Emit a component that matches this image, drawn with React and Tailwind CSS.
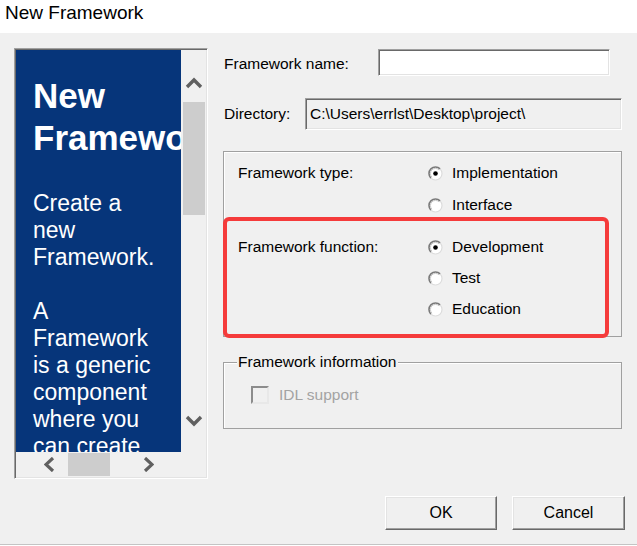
const sunken =
  "border border-t-[#a0a0a0] border-l-[#a0a0a0] border-b-white border-r-white shadow-[inset_1px_1px_0_#696969,inset_-1px_-1px_0_#e3e3e3]";
const raised =
  "border border-t-white border-l-white border-b-[#696969] border-r-[#696969] shadow-[inset_-1px_-1px_0_#a0a0a0,inset_1px_1px_0_#e3e3e3]";

const Chevron = ({ dir }) => {
  if (dir === "up" || dir === "down") {
    const pts = dir === "up" ? "2,10 9,3 16,10" : "2,3 9,10 16,3";
    return (
      <svg width="18" height="13" viewBox="0 0 18 13">
        <polyline points={pts} fill="none" stroke="#606060" strokeWidth="3.4" />
      </svg>
    );
  }
  const pts = dir === "left" ? "9,1 2,7.5 9,14" : "2,1 9,7.5 2,14";
  return (
    <svg width="11" height="15" viewBox="0 0 11 15">
      <polyline points={pts} fill="none" stroke="#606060" strokeWidth="3.2" />
    </svg>
  );
};

const Radio = ({ checked, label }) => (
  <div className="flex h-[20px] items-center">
    <svg width="15" height="15" viewBox="0 0 15 15" className="ml-[-1px]">
      <circle cx="7.5" cy="7.5" r="6.5" fill="#fff" />
      <path d="M2.9 12.1 A6.5 6.5 0 0 1 12.1 2.9" fill="none" stroke="#7a7a7a" strokeWidth="1.6" />
      <path d="M3.9 11.1 A5 5 0 0 1 11.1 3.9" fill="none" stroke="#c8c8c8" strokeWidth="1" />
      <path d="M12.1 2.9 A6.5 6.5 0 0 1 2.9 12.1" fill="none" stroke="#dcdcdc" strokeWidth="1.2" />
      {checked && <circle cx="7.5" cy="7.5" r="2.3" fill="#000" />}
    </svg>
    <span className="ml-[9px]">{label}</span>
  </div>
);

const InfoPanel = () => (
  <div className={`ml-[14px] mt-[15px] h-[431px] w-[194px] p-[1px] ${sunken}`}>
    <div className="grid h-full grid-cols-[165px_25px] grid-rows-[402px_25px]">
      <div className="overflow-hidden bg-[#06357a] pl-[17px] text-white">
        <h2 className="mt-[25px] w-[130px] text-[35px] font-bold leading-[42px]">New Framework</h2>
        <p className="mt-[31px] w-[130px] text-[23px] leading-[27px]">Create a new Framework.</p>
        <p className="mt-[27px] w-[130px] text-[23px] leading-[27px]">
          A Framework is a generic component where you can create ...
        </p>
      </div>
      <div className="flex flex-col items-center">
        <div className="flex h-[52px] items-center justify-center pt-[14px]">
          <Chevron dir="up" />
        </div>
        <div className="h-[113px] w-[22px] bg-[#cdcdcd]" />
        <div className="flex-1" />
        <div className="flex h-[52px] items-center justify-center pb-[12px]">
          <Chevron dir="down" />
        </div>
      </div>
      <div className="flex items-center">
        <div className="flex w-[52px] items-center justify-center pl-[14px]">
          <Chevron dir="left" />
        </div>
        <div className="h-[23px] w-[42px] bg-[#cdcdcd]" />
        <div className="flex-1" />
        <div className="flex w-[52px] items-center justify-center pr-[14px]">
          <Chevron dir="right" />
        </div>
      </div>
      <div />
    </div>
  </div>
);

export default function App() {
  return (
    <div
      className="h-[546px] w-[637px] overflow-hidden bg-white text-black"
      style={{ fontFamily: '"Liberation Sans", Arial, sans-serif' }}
    >
      <div className="h-[33px] pl-[5px] pt-[2px] text-[19px] leading-[22px]">New Framework</div>

      <div className="flex h-[512px] border-b border-[#c4c4c4] bg-[#f0f0f0] text-[15.5px] leading-[18px]">
        <InfoPanel />

        <div className="ml-[15px] flex w-[402px] flex-col pt-[16px]">
          <div className="flex h-[27px] items-center">
            <span className="ml-[1px] mt-[3px] w-[154px]">Framework name:</span>
            <div className={`h-[27px] w-[232px] bg-white ${sunken}`} />
          </div>

          <div className="mt-[22px] flex h-[32px] items-center">
            <span className="ml-[1px] w-[81px]">Directory:</span>
            <div className={`flex h-[32px] w-[317px] items-center pl-[4px] ${sunken}`}>
              C:\Users\errlst\Desktop\project\
            </div>
          </div>

          <div className="relative mt-[21px] h-[186px] w-[399px] border border-[#a0a0a0] pl-[14px] pt-[11px] shadow-[inset_1px_1px_0_#fff]">
            <div className="flex">
              <div className="flex h-[20px] w-[191px] items-center">Framework type:</div>
              <div className="flex flex-col gap-[12px]">
                <Radio checked label="Implementation" />
                <Radio label="Interface" />
              </div>
            </div>
            <div className="mt-[22px] flex">
              <div className="flex h-[20px] w-[191px] items-center">Framework function:</div>
              <div className="flex flex-col gap-[11px]">
                <Radio checked label="Development" />
                <Radio label="Test" />
                <Radio label="Education" />
              </div>
            </div>
            <div className="absolute left-[-1px] top-[65px] h-[121px] w-[386px] rounded-[6px] border-4 border-[#f53b3b]" />
          </div>

          <div className="relative mt-[25px] h-[67px] w-[399px] border border-[#a0a0a0] pl-[27px] pt-[23px] shadow-[inset_1px_1px_0_#fff]">
            <span className="absolute left-[13px] top-[-10px] bg-[#f0f0f0] px-[1px]">Framework information</span>
            <div className="flex h-[18px] items-center text-[#a3a3a3]">
              <div className="h-[18px] w-[18px] border-2 border-t-[#8c8c8c] border-l-[#8c8c8c] border-b-[#e8e8e8] border-r-[#e8e8e8] bg-[#f0f0f0]" />
              <span className="ml-[10px]">IDL support</span>
            </div>
          </div>

          <div className="mt-[67px] flex text-[16px]">
            <button className={`ml-[162px] h-[34px] w-[112px] bg-[#f0f0f0] ${raised}`}>OK</button>
            <button className={`ml-[15px] h-[34px] w-[113px] bg-[#f0f0f0] ${raised}`}>Cancel</button>
          </div>
        </div>
      </div>
    </div>
  );
}
